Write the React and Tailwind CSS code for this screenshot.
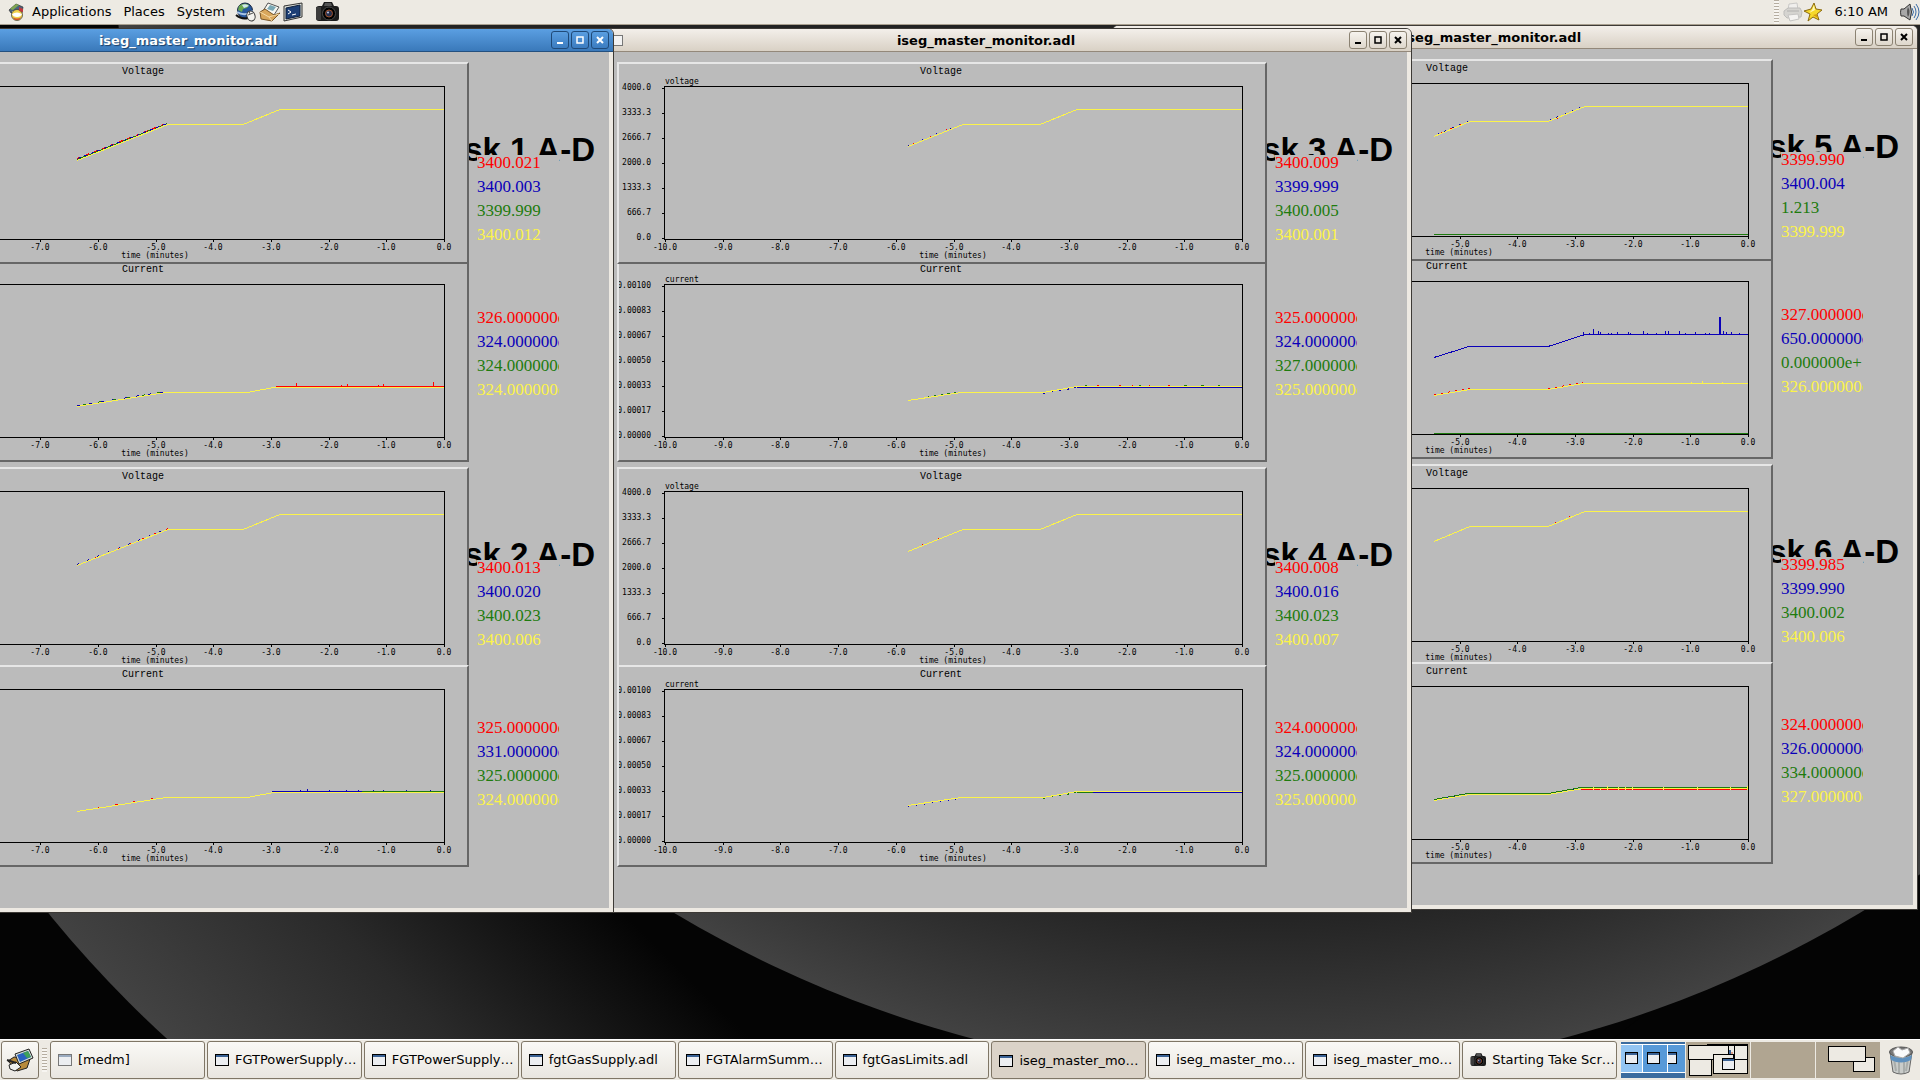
import React from 'react';
import clsx from 'clsx';

const RED = '#ff0000';
const BLUE = '#0a00b8';
const GREEN = '#1e7b0e';
const YELLOW = '#fbf34a';

const VALUE_COLORS = ['text-[#ff0000]', 'text-[#0a00b8]', 'text-[#1e7b0e]', 'text-[#fbf34a]'];

const X_TICKS = ['-10.0', '-9.0', '-8.0', '-7.0', '-6.0', '-5.0', '-4.0', '-3.0', '-2.0', '-1.0', '0.0'];
const VOLTAGE_TICKS = ['4000.0', '3333.3', '2666.7', '2000.0', '1333.3', '666.7', '0.0'];
const CURRENT_TICKS = ['0.00100', '0.00083', '0.00067', '0.00050', '0.00033', '0.00017', '0.00000'];

// one path with a vertical tick for every [x, top] pair
const spikes = (base, list) => list.map(([x, y]) => `M${x} ${base}V${y}`).join('');

const VOLTAGE_A = 'M256 96.5L347 60.5H422L459 45.5H623';
const VOLTAGE_B = 'M289 82.5L344 60.5H421L458 45.5H623';
const VOLTAGE_C = 'M309 75.5L345 60.5H423L460 45.5H623';
const CURRENT_A = 'M256 144.5L345 130.5H426L453 125.5H623';
const CURRENT_B = 'M289 138.5L342 130.5H424L458 124.5H623';
const CURRENT_C = 'M309 136.5L345 130.5H423L458 124.5H623';

const MONITORS = [
  {
    id: 1,
    position: '-left-[192px] top-[3px] z-30',
    active: true,
    groups: [
      {
        label: 'sk 1 A-D',
        voltage: ['3400.021', '3400.003', '3399.999', '3400.012'],
        current: ['326.000000e', '324.000000e', '324.000000e', '324.000000e'],
        voltageLines: [
          { color: GREEN, d: 'M256 95.5L346 59.5' },
          { color: RED, d: 'M256 94.5L345 59.5', dash: '4 5' },
          { color: BLUE, d: 'M257 94.5L346 59.5', dash: '3 4' },
          { color: YELLOW, d: VOLTAGE_A },
        ],
        currentLines: [
          { color: BLUE, d: 'M256 143.5L345 129.5', dash: '3 9' },
          { color: GREEN, d: 'M262 142.5L345 129.5', dash: '3 12' },
          { color: RED, d: 'M455 124.5H623' + spikes(125, [[475.5, 121], [520.5, 123], [526.5, 122], [557.5, 123], [562.5, 122], [612.5, 120]]) },
          { color: YELLOW, d: CURRENT_A },
        ],
      },
      {
        label: 'sk 2 A-D',
        voltage: ['3400.013', '3400.020', '3400.023', '3400.006'],
        current: ['325.000000e', '331.000000e', '325.000000e', '324.000000e'],
        voltageLines: [
          { color: BLUE, d: 'M256 95.5L347 59.5', dash: '2 9' },
          { color: RED, d: 'M261 94.5L347 59.5', dash: '2 11' },
          { color: YELLOW, d: VOLTAGE_A },
        ],
        currentLines: [
          { color: RED, d: 'M259 143.5L346 129.5M436 128.5H439', dash: '2 16' },
          { color: BLUE, d: 'M451 124.5H541' + spikes(125, [[479.5, 123], [486.5, 122], [508.5, 123], [525.5, 123], [537.5, 123], [552.5, 123], [562.5, 123], [585.5, 123], [609.5, 123]]) },
          { color: GREEN, d: 'M541 124.5H623' },
          { color: YELLOW, d: CURRENT_A },
        ],
      },
    ],
  },
  {
    id: 3,
    position: 'left-[606px] top-[3px] z-20',
    groups: [
      {
        label: 'sk 3 A-D',
        voltage: ['3400.009', '3399.999', '3400.005', '3400.001'],
        current: ['325.000000e', '324.000000e', '327.000000e', '325.000000e'],
        voltageLines: [
          { color: BLUE, d: 'M289 81.5L342 60', dash: '1 14' },
          { color: RED, d: 'M294 79.5L342 60', dash: '1 17' },
          { color: YELLOW, d: VOLTAGE_B },
        ],
        currentLines: [
          { color: BLUE, d: 'M424 131.5L458 125.5', dash: '2 6' },
          { color: BLUE, d: 'M458 125.5H623' },
          { color: GREEN, d: 'M294 137.5L342 129.5', dash: '2 5' },
          { color: GREEN, d: 'M466 123.5h2M520 123.5h2M565 123.5h3M582 123.5h3M599 123.5h2' },
          { color: RED, d: 'M478 123.5h2M500 123.5h2M513 123.5h1M530 123.5h1M549 123.5h2' },
          { color: YELLOW, d: CURRENT_B },
        ],
      },
      {
        label: 'sk 4 A-D',
        voltage: ['3400.008', '3400.016', '3400.023', '3400.007'],
        current: ['324.000000e', '324.000000e', '325.000000e', '325.000000e'],
        voltageLines: [
          { color: RED, d: 'M303 76L342 60', dash: '1 16' },
          { color: YELLOW, d: VOLTAGE_B },
        ],
        currentLines: [
          { color: BLUE, d: 'M289 139.5L342 131.5', dash: '1 7' },
          { color: GREEN, d: 'M424 131.5L458 125.5', dash: '2 6' },
          { color: GREEN, d: 'M458 125.5H474' },
          { color: BLUE, d: 'M474 125.5H623' },
          { color: YELLOW, d: CURRENT_B },
        ],
      },
    ],
  },
  {
    id: 5,
    position: 'left-[1112px] top-0 z-10',
    groups: [
      {
        label: 'sk 5 A-D',
        voltage: ['3399.990', '3400.004', '1.213', '3399.999'],
        current: ['327.000000e', '650.000000e', '0.000000e+', '326.000000e'],
        voltageLines: [
          { color: BLUE, d: 'M312 73.5L344 60M424 59.5L458 45.5', dash: '2 6' },
          { color: RED, d: 'M315 72.5L344 60M431 57.5h3', dash: '2 9' },
          { color: GREEN, d: 'M309 173.5H623' },
          { color: YELLOW, d: VOLTAGE_C },
        ],
        currentLines: [
          {
            color: BLUE,
            d:
              'M309 98.5L344 87.5H423L460 75.5H623' +
              spikes(76, [
                [458.5, 73], [464.5, 74], [468.5, 70], [473.5, 72], [475.5, 73], [483.5, 74], [486.5, 74], [492.5, 73],
                [503.5, 73], [505.5, 74], [518.5, 72], [522.5, 74], [531.5, 74], [540.5, 72], [543.5, 72], [554.5, 72],
                [560.5, 74], [570.5, 73], [580.5, 74], [584.5, 74], [594.5, 58], [595.5, 58], [598.5, 72], [601.5, 73],
                [606.5, 73], [614.5, 74],
              ]),
          },
          { color: GREEN, d: 'M309 174.5H623' },
          { color: YELLOW, d: CURRENT_C + spikes(125, [[566.5, 123], [577.5, 122], [597.5, 123]]) },
          { color: RED, d: 'M309 135.5L345 129.5M423 129.5L458 123.5', dash: '2 5' },
        ],
      },
      {
        label: 'sk 6 A-D',
        voltage: ['3399.985', '3399.990', '3400.002', '3400.006'],
        current: ['324.000000e', '326.000000e', '334.000000e', '327.000000e'],
        voltageLines: [
          { color: RED, d: 'M430 56.5L458 45', dash: '1 14' },
          { color: YELLOW, d: VOLTAGE_C },
        ],
        currentLines: [
          { color: GREEN, d: 'M309 135.5L343 129.5H423L456 123.5H623' },
          { color: BLUE, d: 'M313 135.5L343 130.5M424 130.5L456 124.5', dash: '2 6' },
          { color: RED, d: 'M456 125.5H623' },
          { color: YELLOW, d: CURRENT_C },
          { color: YELLOW, d: spikes(126, [[468.5, 123], [475.5, 124], [482.5, 122], [493.5, 123], [500.5, 123], [507.5, 123], [538.5, 123], [572.5, 123], [605.5, 123], [622.5, 122]]) },
        ],
      },
    ],
  },
];

const TASKS = [
  { label: '[medm]', icon: 'dim' },
  { label: 'FGTPowerSupply…', icon: 'window' },
  { label: 'FGTPowerSupply…', icon: 'window' },
  { label: 'fgtGasSupply.adl', icon: 'window' },
  { label: 'FGTAlarmSumm…', icon: 'window' },
  { label: 'fgtGasLimits.adl', icon: 'window' },
  { label: 'iseg_master_mo…', icon: 'window', active: true },
  { label: 'iseg_master_mo…', icon: 'window' },
  { label: 'iseg_master_mo…', icon: 'window' },
  { label: 'Starting Take Scr…', icon: 'camera' },
];

/* ---------- icons ---------- */

const WindowIcon = ({ dim }) => (
  <svg width="14" height="12" viewBox="0 0 14 12" className="shrink-0">
    <rect x="0.5" y="0.5" width="13" height="11" fill="#eceef1" stroke={dim ? '#777' : '#000'} />
    <rect x="1" y="1" width="12" height="2" fill={dim ? '#9aabc0' : '#3a6295'} />
  </svg>
);

const CameraIcon = ({ className }) => (
  <svg viewBox="0 0 24 20" className={clsx('shrink-0', className)}>
    <path d="M1 7q0-3 3-3h3l2-4h8l2 4h2q3 0 3 3v9q0 3-3 3H4q-3 0-3-3z" fill="#1c1c1c" />
    <path d="M1 5h5v13H3q-2 0-2-2z" fill="#3c3c3c" />
    <path d="M10 1h6l1 3H9z" fill="#555" />
    <circle cx="14" cy="11.500" r="6.500" fill="#000" stroke="#4a4a4a" />
    <circle cx="14" cy="11.500" r="3.500" fill="#27304e" stroke="#a0522d" />
    <circle cx="13" cy="10.500" r="1" fill="#c4cbe6" />
  </svg>
);

const AppsIcon = () => (
  <svg width="18" height="18" viewBox="0 0 18 18">
    <path d="M1 7l7-6 7 3-1 6H3z" fill="#49627f" stroke="#333" strokeWidth="0.7" />
    <path d="M2 6l6-5 3 1-6 5z" fill="#7fa650" />
    <path d="M4 8h9v4H4z" fill="#e9e1c6" />
    <circle cx="9" cy="12" r="5.500" fill="#f1d24c" stroke="#333" strokeWidth="0.7" />
    <path d="M4 11q5-3 10 0-1 3-5 3t-5-3z" fill="#fff" />
    <path d="M5 14q4 3 8 0l-2 3H7z" fill="#d4542b" />
    <path d="M11 4l4 2v3l-4-1z" fill="#c3383a" />
  </svg>
);

const GlobeIcon = () => (
  <svg width="22" height="20" viewBox="0 0 22 20">
    <circle cx="10" cy="8.500" r="7.500" fill="#27579c" stroke="#16233c" />
    <path d="M4 4q5-4 10-1l-2 3-4 1-1 3-4-2z" fill="#6aa84f" />
    <path d="M7 3q4-2 7 1l-5 2z" fill="#cfe7ee" />
    <path d="M2 10q8 5 16-1" fill="none" stroke="#a9c5e6" strokeWidth="2" />
    <path d="M1 13q6 5 12 3" fill="none" stroke="#111" strokeWidth="2" />
    <ellipse cx="16" cy="14" rx="4" ry="5" transform="rotate(-20 16 14)" fill="#f2f2ee" stroke="#333" />
    <path d="M13 13l5-2M15 12l-1-3" stroke="#555" fill="none" />
  </svg>
);

const MailIcon = () => (
  <svg width="22" height="20" viewBox="0 0 22 20">
    <path d="M9 1l11 4-5 8-11-4z" fill="#f7f7f2" stroke="#555" />
    <path d="M11 3l6 2-3 4-6-2z" fill="#79a8b5" />
    <path d="M1 10l5-3 9 6 6-2-8 8L2 17z" fill="#d9a75c" stroke="#7a5728" />
    <path d="M1 10l9 5 3 4M10 15l10-3" fill="none" stroke="#f4d9a6" />
  </svg>
);

const TerminalIcon = () => (
  <svg width="20" height="20" viewBox="0 0 20 20">
    <path d="M1 4l18-3v14L1 19z" fill="#d9dcd6" stroke="#333" />
    <path d="M3 6l14-3v11L3 17z" fill="#1d3f75" stroke="#0c1f3d" />
    <path d="M5 8l3 2-3 2M9 13l4-1" fill="none" stroke="#fff" />
  </svg>
);

const PrinterIcon = () => (
  <svg width="20" height="20" viewBox="0 0 20 20" className="opacity-70">
    <path d="M6 2l8-1 1 7H5z" fill="#f2f2f2" stroke="#bbb" />
    <path d="M1 9l4-3h12l2 4-1 5-14 1-3-3z" fill="#cbcbc8" stroke="#aaa" />
    <path d="M5 13l10-1 1 5-9 2z" fill="#f7f7f7" stroke="#b5b5b5" />
    <path d="M4 9h12" stroke="#999" />
  </svg>
);

const StarIcon = () => (
  <svg width="20" height="20" viewBox="0 0 20 20">
    <path d="M11 1l2 6 6 1-5 4 2 6-6-3-5 4 2-7-6-3 7-2z" fill="#f6d829" stroke="#8b6a10" />
    <path d="M11 3l1 5-6 3 3-3z" fill="#fff9b8" />
    <path d="M14 12l1 4-5-3z" fill="#d39a12" />
  </svg>
);

const SpeakerIcon = () => (
  <svg width="20" height="20" viewBox="0 0 20 20">
    <path d="M1 7h3l6-5q3 8 0 16l-6-4H1q-1-4 0-7z" fill="#a8a8a8" stroke="#333" />
    <path d="M8 5q3 5 0 10-2-5 0-10z" fill="#555" />
    <path d="M12 6q3 4 0 8M14 4q4 6 0 12M16 2q6 8 0 16" fill="none" stroke="#3b6ba5" />
  </svg>
);

const DesktopIcon = () => (
  <svg width="28" height="24" viewBox="0 0 28 24">
    <path d="M2 13l6-4 16 2-3 9-10 3z" fill="#b78a3c" stroke="#222" />
    <path d="M9 6l14-5 4 9-14 6z" fill="#d8dfd8" stroke="#222" />
    <path d="M11 7l11-4 3 6-11 5z" fill="#2a62c0" />
    <path d="M17 5l5-2 3 6-4 1z" fill="#3fa15a" />
    <path d="M3 17l7-3 5 5-6 4-5-2z" fill="#f0f0ee" stroke="#222" />
    <path d="M1 12l9 3" stroke="#222" strokeWidth="2" />
  </svg>
);

const TrashIcon = () => (
  <svg width="26" height="30" viewBox="0 0 26 30">
    <path d="M2 7l3 20q8 4 16 0l3-20z" fill="#c9ccca" stroke="#666" />
    <path d="M6 14l2 12M11 15v13M16 15v13M20 14l-2 12" stroke="#a9adab" strokeWidth="2" />
    <path d="M2 10q11 6 22 0l-1 5q-10 5-20 0z" fill="#5f90bd" />
    <ellipse cx="13" cy="7" rx="11.500" ry="5" fill="#777" stroke="#555" />
    <path d="M5 6l5-4 4 3 6-2 2 5-7 5-8-2z" fill="#fafafa" stroke="#aaa" />
  </svg>
);

const Wallpaper = () => (
  <svg
    className="absolute inset-0 h-full w-full"
    viewBox="0 0 1920 1080"
    preserveAspectRatio="xMidYMid slice"
  >
    <defs>
      <linearGradient id="back-disc" gradientUnits="userSpaceOnUse" x1="120" y1="1010" x2="421" y2="709">
        <stop offset="0" stopColor="#444" />
        <stop offset="0.5" stopColor="#2a2a2a" />
        <stop offset="1" stopColor="#040404" />
      </linearGradient>
      <radialGradient id="front-disc" gradientUnits="userSpaceOnUse" cx="1267" cy="-76" r="1153">
        <stop offset="0.85" stopColor="#222" />
        <stop offset="1" stopColor="#424242" />
      </radialGradient>
    </defs>
    <rect width="1920" height="1080" fill="#040404" />
    <circle cx="944" cy="187" r="1153" fill="url(#back-disc)" />
    <path d="M1560 1080L1920 800V1080z" fill="#040404" />
    <circle cx="1267" cy="-76" r="1153" fill="url(#front-disc)" />
  </svg>
);

/* ---------- strip charts ---------- */

const StripChart = ({ title, unit, ticks, lines, className }) => (
  <div
    className={clsx(
      'h-[202px] overflow-hidden border-2 border-t-[#e6e6e6] border-r-[#666] border-b-[#666] border-l-[#e6e6e6] bg-[#bbb]',
      className
    )}
  >
    <svg
      width="646"
      height="198"
      viewBox="0 0 646 198"
      className="font-['DejaVu_Sans_Mono',monospace] text-[8px]"
      shapeRendering="crispEdges"
    >
      <text x="322" y="10" textAnchor="middle" className="font-['Liberation_Mono',monospace] text-[10px]">
        {title}
      </text>
      <text x="46" y="20">{unit}</text>
      <rect x="45.5" y="22.5" width="578" height="153" fill="none" stroke="#000" />
      {ticks.map((tick, i) => (
        <g key={tick}>
          <path d={`M43 ${24.5 + i * 25}h3`} stroke="#000" />
          <text x="32" y={26 + i * 25} textAnchor="end">{tick}</text>
        </g>
      ))}
      {X_TICKS.map((tick, i) => (
        <g key={tick}>
          <path d={`M${Math.round(46 + i * 57.7) + 0.5} 176v2`} stroke="#000" />
          <text x={Math.round(46 + i * 57.7)} y="186" textAnchor="middle">{tick}</text>
        </g>
      ))}
      <text x="334" y="194" textAnchor="middle">time (minutes)</text>
      {lines.map((line, i) => (
        <path key={i} d={line.d} fill="none" stroke={line.color} strokeDasharray={line.dash} />
      ))}
    </svg>
  </div>
);

const Readings = ({ values, className }) => (
  <ul className={clsx("relative ml-2 flex w-[82px] flex-col gap-2 font-['Liberation_Serif',serif] text-[17px] leading-4", className)}>
    {values.map((value, i) => (
      <li key={i} className={clsx('h-4 overflow-hidden bg-[#bbb] whitespace-nowrap', VALUE_COLORS[i])}>
        {value}
      </li>
    ))}
  </ul>
);

const ChannelGroup = ({ group, second }) => (
  <div className="flex">
    <div className="w-[650px] shrink-0">
      <StripChart
        title="Voltage"
        unit="voltage"
        ticks={VOLTAGE_TICKS}
        lines={group.voltageLines}
        className={second ? '' : 'relative z-10'}
      />
      <StripChart
        title="Current"
        unit="current"
        ticks={CURRENT_TICKS}
        lines={group.currentLines}
        className="relative -mt-1"
      />
    </div>
    <div className="flex-1 overflow-hidden pt-[71px]">
      <h2 className="flex justify-end pr-3.5 font-['Liberation_Sans',sans-serif] text-[33px] leading-[33px] font-bold whitespace-nowrap">
        {group.label}
      </h2>
      <Readings values={group.voltage} className="-mt-[11px]" />
      <Readings values={group.current} className={second ? 'mt-[72px]' : 'mt-[67px]'} />
    </div>
  </div>
);

/* ---------- window frame ---------- */

const FrameButton = ({ active, label, children }) => (
  <button
    type="button"
    aria-label={label}
    className={clsx(
      'flex h-[18px] w-[18px] items-center justify-center rounded-[3px] border',
      active
        ? 'border-[#1f4a78] bg-linear-to-b from-[#5a9ee0] to-[#3b7cc0] text-white'
        : 'border-[#8b8272] bg-linear-to-b from-[#f6f3ee] to-[#ded7cc] text-black'
    )}
  >
    <svg width="10" height="10" viewBox="0 0 10 10" fill="none" stroke="currentColor" strokeWidth="2">
      {children}
    </svg>
  </button>
);

const MonitorWindow = ({ monitor }) => {
  const { active, position, groups } = monitor;
  return (
    <section
      className={clsx('absolute w-[806px] rounded-t-md border border-[#3d3a36] bg-[#ede9e2]', position)}
    >
      <header
        className={clsx(
          'flex h-[23px] items-center gap-0.5 rounded-t-[5px] border-b px-1 pl-0.5',
          active
            ? 'border-[#24507f] bg-linear-to-b from-[#5b9fe2] to-[#3a79ba]'
            : 'border-[#93887a] bg-linear-to-b from-[#f3efea] to-[#d9d1c5]'
        )}
      >
        <span className="h-[11px] w-[14px] border border-[#777] bg-[#f2f2f2]" />
        <h1
          className={clsx(
            "flex-1 pt-px text-center font-['DejaVu_Sans',sans-serif] text-[13px] leading-4 font-bold",
            active ? 'text-white [text-shadow:1px_1px_1px_#1b3f66]' : 'text-black'
          )}
        >
          iseg_master_monitor.adl
        </h1>
        <FrameButton active={active} label="Minimize">
          <path d="M2 8h6" />
        </FrameButton>
        <FrameButton active={active} label="Maximize">
          <path d="M2 2h6v6H2z" strokeWidth="1.500" />
        </FrameButton>
        <FrameButton active={active} label="Close">
          <path d="M2 2l6 6M8 2l-6 6" />
        </FrameButton>
      </header>
      <div className="mx-1 mb-1 flex flex-col gap-[5px] bg-[#bbb] pt-2.5 pb-[41px] pl-1.5">
        {groups.map((group, i) => (
          <ChannelGroup key={group.label} group={group} second={i === 1} />
        ))}
      </div>
    </section>
  );
};

/* ---------- panels ---------- */

const Grip = ({ className }) => (
  <span
    className={clsx(
      'w-[5px] shrink-0 bg-[repeating-linear-gradient(to_bottom,#b5ada0_0px,#b5ada0_1px,#f7f5f1_1px,#f7f5f1_3px)]',
      className
    )}
  />
);

const TopPanel = () => (
  <nav className="relative z-40 flex h-[25px] items-center border-b border-[#a89f8f] bg-[#edeae3] pl-2">
    <button type="button" className="flex items-center gap-1.5">
      <AppsIcon />
      Applications
    </button>
    <button type="button" className="ml-3">Places</button>
    <button type="button" className="ml-3">System</button>
    <div className="ml-2.5 flex items-center gap-0.5">
      <GlobeIcon />
      <MailIcon />
      <TerminalIcon />
      <CameraIcon className="ml-2.5 h-5 w-6" />
    </div>
    <div className="ml-auto flex items-center">
      <Grip className="mr-1 h-6" />
      <PrinterIcon />
      <StarIcon />
      <time className="mr-3 ml-3">6:10 AM</time>
      <SpeakerIcon />
    </div>
  </nav>
);

const MiniIcon = ({ x, y }) => (
  <g>
    <rect x={x + 0.5} y={y + 0.5} width="12" height="11" fill="#eceef1" stroke="#000" />
    <path d={`M${x + 1} ${y + 2}h11`} stroke="#3a6295" strokeWidth="2" />
  </g>
);

const Workspaces = () => (
  <div className="flex h-9 shrink-0 gap-px">
    <svg width="64" height="36" className="bg-[#3b6c9f]">
      <rect x="0" y="3" width="21" height="27" fill="#93c5f3" />
      <rect x="22" y="3" width="24" height="27" fill="#5799d8" />
      <rect x="47" y="3" width="17" height="27" fill="#5799d8" />
      <path d="M0 2.500h64M0 30.500h64M21.500 3v27" stroke="#fff" />
      <MiniIcon x={4} y={10} />
      <MiniIcon x={26} y={10} />
      <MiniIcon x={43} y={10} />
      <rect x="43" y="10" width="3" height="12" fill="#5799d8" />
      <path d="M46.500 3v27" stroke="#fff" />
    </svg>
    <svg width="64" height="36" className="bg-[#b0a591]" fill="#edeae3" stroke="#000">
      <path d="M21 2.500h41" />
      <rect x="40.500" y="3.500" width="21" height="28" />
      <rect x="2.500" y="3.500" width="40" height="14" />
      <rect x="48.500" y="3.500" width="13" height="14" />
      <rect x="3.500" y="17.500" width="22" height="16" />
      <rect x="27.500" y="12.500" width="20" height="19" />
      <rect x="28" y="18" width="32" height="13" stroke="none" />
      <path d="M27.500 12v19.500h34V3" fill="none" />
      <path d="M44 8v4" stroke="#3a6295" strokeWidth="2" />
      <path d="M46 10v2" stroke="#d4542b" />
      <MiniIcon x={36} y={16} />
    </svg>
    <div className="w-16 bg-[#b0a591]" />
    <svg width="64" height="36" className="bg-[#b0a591]" fill="#edeae3" stroke="#000">
      <rect x="37.500" y="15.500" width="21" height="14" />
      <rect x="12.500" y="4.500" width="37" height="15" />
    </svg>
  </div>
);

const TaskBar = () => (
  <footer className="relative z-40 flex h-[41px] items-center border-t border-white bg-[#edeae3] pr-1.5 pl-px">
    <button
      type="button"
      aria-label="Show desktop"
      className="flex h-[38px] w-[38px] items-center justify-center rounded-[3px] border border-[#7f7666] bg-linear-to-b from-[#faf9f6] to-[#e9e6e0]"
    >
      <DesktopIcon />
    </button>
    <Grip className="mx-[3px] h-6" />
    <div className="flex min-w-0 flex-1 gap-0.5">
      {TASKS.map((task, i) => (
        <button
          key={i}
          type="button"
          className={clsx(
            'flex h-[38px] min-w-0 flex-1 items-center gap-1.5 overflow-hidden rounded-[3px] border border-[#7f7666] pl-[7px] whitespace-nowrap',
            task.active ? 'bg-[#dbd3c8] pt-0.5' : 'bg-linear-to-b from-[#faf9f6] to-[#e9e6e0]'
          )}
        >
          {task.icon === 'camera' ? <CameraIcon className="h-3.5 w-4" /> : <WindowIcon dim={task.icon === 'dim'} />}
          {task.label}
        </button>
      ))}
    </div>
    <div className="ml-1 flex items-center gap-2">
      <Workspaces />
      <button type="button" aria-label="Trash">
        <TrashIcon />
      </button>
    </div>
  </footer>
);

export default function App() {
  return (
    <div className="relative flex h-screen flex-col overflow-hidden bg-black font-['DejaVu_Sans',sans-serif] text-[13px] leading-4 text-black">
      <Wallpaper />
      <TopPanel />
      <main className="relative flex-1 overflow-hidden">
        {MONITORS.map((monitor) => (
          <MonitorWindow key={monitor.id} monitor={monitor} />
        ))}
      </main>
      <TaskBar />
    </div>
  );
}
